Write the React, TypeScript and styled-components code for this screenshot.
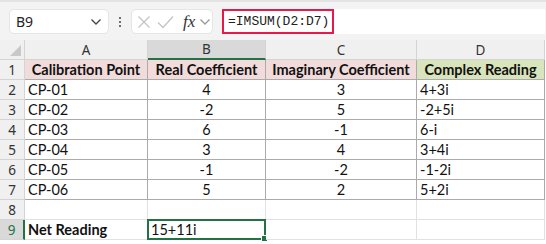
import React from "react";
import styled, { createGlobalStyle, css } from "styled-components";

const Global = createGlobalStyle`
  html, body { margin: 0; padding: 0; background: #ffffff; }
  body { font-family: "Lato", "Liberation Sans", sans-serif; }
`;

const Page = styled.div`
  width: 546px;
  height: 244px;
  overflow: hidden;
  background: #ffffff;
  display: flex;
  flex-direction: column;
`;

const FormulaBar = styled.div`
  height: 40px;
  box-sizing: border-box;
  background: #f3f3f3;
  border-top: 2px solid #e3e3e3;
  padding: 7px 1px 6px 9px;
  display: flex;
  align-items: stretch;
`;

const NameBox = styled.div`
  width: 100px;
  box-sizing: border-box;
  background: #fff;
  border: 1px solid #e6e6e6;
  border-radius: 5px;
  display: flex;
  align-items: center;
  justify-content: space-between;
  padding: 0 6px 0 6px;
  font-family: "Noto Sans", "Liberation Sans", sans-serif;
  font-size: 14px;
  color: #222;
`;

const Dots = styled.div`
  width: 22px;
  display: flex;
  flex-direction: column;
  align-items: center;
  justify-content: center;
  gap: 2px;
  span {
    width: 2px;
    height: 2px;
    background: #444;
    border-radius: 1px;
  }
`;

const FxBox = styled.div`
  width: 82px;
  box-sizing: border-box;
  background: #fff;
  border: 1px solid #e6e6e6;
  border-radius: 5px;
  display: flex;
  align-items: center;
  padding: 0 0 0 4px;
`;

const Fx = styled.span`
  font-family: "Liberation Serif", serif;
  font-style: italic;
  font-size: 17px;
  color: #333;
  margin-left: 8px;
  margin-right: 4px;
  line-height: 1;
`;

const Input = styled.div`
  flex: 1;
  margin-left: 9px;
  background: #fff;
  display: flex;
  align-items: stretch;
`;

const Highlight = styled.div`
  width: 112px;
  box-sizing: border-box;
  border: 2px solid #e8174c;
  display: flex;
  align-items: center;
  padding-left: 4px;
  font-family: "Liberation Mono", monospace;
  font-size: 13px;
  color: #222;
`;

const Grid = styled.div`
  display: grid;
  grid-template-columns: 25px 123px 118px 151px 128px;
  grid-auto-rows: 20px;
  font-size: 14.5px;
  color: #111;
`;

const cellBase = css`
  box-sizing: border-box;
  display: flex;
  align-items: center;
  white-space: nowrap;
  overflow: hidden;
`;

const Corner = styled.div`
  ${cellBase};
  background: #f0f0f0;
  border-right: 1px solid #d4d4d4;
  border-bottom: 1px solid #d4d4d4;
  position: relative;
  &::after {
    content: "";
    position: absolute;
    right: 3px;
    bottom: 3px;
    width: 0;
    height: 0;
    border-left: 11px solid transparent;
    border-bottom: 11px solid #c8c8c8;
  }
`;

const ColHead = styled.div<{ $sel?: boolean }>`
  ${cellBase};
  justify-content: center;
  font-family: "Noto Sans", "Liberation Sans", sans-serif;
  font-size: 13.5px;
  color: #333;
  background: ${(p) => (p.$sel ? "#d9d9d9" : "#f0f0f0")};
  border-right: 1px solid #d4d4d4;
  border-bottom: ${(p) => (p.$sel ? "2px solid #217346" : "1px solid #d4d4d4")};
`;

const RowHead = styled.div<{ $sel?: boolean }>`
  ${cellBase};
  justify-content: center;
  font-family: "Noto Sans", "Liberation Sans", sans-serif;
  font-size: 13.5px;
  color: ${(p) => (p.$sel ? "#217346" : "#333")};
  background: ${(p) => (p.$sel ? "#d9d9d9" : "#f0f0f0")};
  border-right: ${(p) => (p.$sel ? "2px solid #217346" : "1px solid #d4d4d4")};
  border-bottom: 1px solid #d4d4d4;
`;

const Cell = styled.div<{
  $align?: "left" | "center";
  $bold?: boolean;
  $bg?: string;
  $table?: boolean;
  $sel?: boolean;
}>`
  ${cellBase};
  justify-content: ${(p) => (p.$align === "center" ? "center" : "flex-start")};
  padding-left: ${(p) => (p.$align === "center" ? "0" : "3px")};
  font-weight: ${(p) => (p.$bold ? 700 : 400)};
  background: ${(p) => p.$bg || "#fff"};
  border-right: 1px solid ${(p) => (p.$table ? "#ababab" : "#e1e1e1")};
  border-bottom: 1px solid ${(p) => (p.$table ? "#ababab" : "#e1e1e1")};
  position: relative;
  ${(p) =>
    p.$sel &&
    css`
      overflow: visible;
      &::before {
        content: "";
        position: absolute;
        left: -1px;
        top: -1px;
        right: -1px;
        bottom: -1px;
        border: 2px solid #217346;
      }
      &::after {
        content: "";
        position: absolute;
        right: -3px;
        bottom: -3px;
        width: 5px;
        height: 5px;
        background: #217346;
        border: 1px solid #fff;
      }
    `}
`;

const X = () => (
  <svg width="16" height="16" viewBox="0 0 16 16">
    <path d="M2.5 2.5 L13.5 13.5 M13.5 2.5 L2.5 13.5" stroke="#c4c4c4" strokeWidth="1.3" fill="none" />
  </svg>
);
const Check = () => (
  <svg width="18" height="16" viewBox="0 0 18 16" style={{ marginLeft: 5 }}>
    <path d="M1 8.5 L6 13.5 L16 2.5" stroke="#c4c4c4" strokeWidth="1.3" fill="none" />
  </svg>
);
const Chevron = ({ color = "#444" }: { color?: string }) => (
  <svg width="12" height="8" viewBox="0 0 12 8">
    <path d="M1.5 1.5 L6 6 L10.5 1.5" stroke={color} strokeWidth="1.3" fill="none" />
  </svg>
);

const headers = [
  "Calibration Point",
  "Real Coefficient",
  "Imaginary Coefficient",
  "Complex Reading",
];

const data: [string, string, string, string][] = [
  ["CP-01", "4", "3", "4+3i"],
  ["CP-02", "-2", "5", "-2+5i"],
  ["CP-03", "6", "-1", "6-i"],
  ["CP-04", "3", "4", "3+4i"],
  ["CP-05", "-1", "-2", "-1-2i"],
  ["CP-06", "5", "2", "5+2i"],
];

export default function App() {
  return (
    <Page>
      <Global />
      <FormulaBar>
        <NameBox>
          <span>B9</span>
          <Chevron />
        </NameBox>
        <Dots>
          <span />
          <span />
          <span />
        </Dots>
        <FxBox>
          <X />
          <Check />
          <Fx>fx</Fx>
          <Chevron color="#999" />
        </FxBox>
        <Input>
          <Highlight>=IMSUM(D2:D7)</Highlight>
        </Input>
      </FormulaBar>
      <Grid>
        <Corner />
        <ColHead>A</ColHead>
        <ColHead $sel>B</ColHead>
        <ColHead>C</ColHead>
        <ColHead>D</ColHead>

        <RowHead>1</RowHead>
        {headers.map((h, i) => (
          <Cell
            key={h}
            $align="center"
            $bold
            $table
            $bg={i === 3 ? "#d8e4bc" : "#f2dcdb"}
          >
            {h}
          </Cell>
        ))}

        {data.map((r, ri) => (
          <React.Fragment key={r[0]}>
            <RowHead>{ri + 2}</RowHead>
            <Cell $table>{r[0]}</Cell>
            <Cell $table $align="center">
              {r[1]}
            </Cell>
            <Cell $table $align="center">
              {r[2]}
            </Cell>
            <Cell $table>{r[3]}</Cell>
          </React.Fragment>
        ))}

        <RowHead>8</RowHead>
        <Cell />
        <Cell />
        <Cell />
        <Cell />

        <RowHead $sel>9</RowHead>
        <Cell $bold>Net Reading</Cell>
        <Cell $sel>15+11i</Cell>
        <Cell />
        <Cell />
      </Grid>
    </Page>
  );
}
